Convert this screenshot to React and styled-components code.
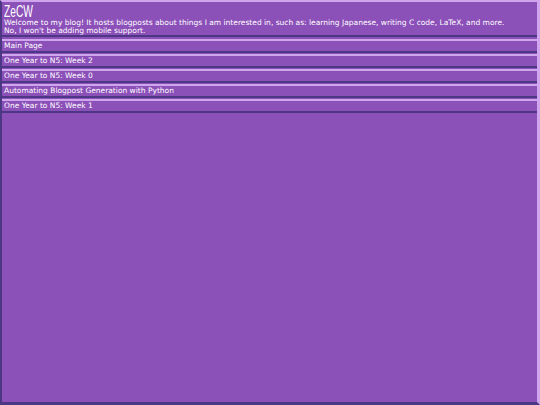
import React from 'react';
import styled, { createGlobalStyle } from 'styled-components';

const posts = [
  'Main Page',
  'One Year to N5: Week 2',
  'One Year to N5: Week 0',
  'Automating Blogpost Generation with Python',
  'One Year to N5: Week 1'
];

const GlobalStyle = createGlobalStyle`
  html, body {
    margin: 0;
    padding: 0;
    background: #8c50b9;
  }
  * {
    box-sizing: border-box;
  }
`;

const Page = styled.div`
  width: 540px;
  height: 405px;
  background: #8c50b9;
  border-top: 2px solid #cfa6ee;
  border-right: 3px solid #cfa6ee;
  border-left: 2px solid #4b3783;
  border-bottom: 3px solid #4b3783;
  display: flex;
  flex-direction: column;
  gap: 2px;
  font-family: "DejaVu Sans", "Liberation Sans", sans-serif;
  color: #ffffff;
`;

const Header = styled.header`
  display: flex;
  flex-direction: column;
  padding: 2px 2px 0;
  border-bottom: 2px solid #4b3783;
`;

const Title = styled.h1`
  margin: 0;
  height: 15px;
  font-family: "Liberation Sans", sans-serif;
  font-size: 17px;
  line-height: 15px;
  font-weight: normal;
  transform: scaleX(0.6);
  transform-origin: left center;
`;

const Intro = styled.p`
  margin: 0;
  font-size: 7.5px;
  line-height: 8px;
  white-space: nowrap;
`;

const PostList = styled.nav`
  display: flex;
  flex-direction: column;
  gap: 1px;
`;

const PostLink = styled.a`
  display: block;
  height: 14px;
  padding: 0 2px;
  border-top: 2px solid #cfa6ee;
  border-bottom: 2px solid #4b3783;
  font-size: 7.5px;
  line-height: 10px;
  color: #ffffff;
  text-decoration: none;
  white-space: nowrap;
`;

export default function App() {
  return (
    <>
      <GlobalStyle />
      <Page>
        <Header>
          <Title>ZeCW</Title>
          <Intro>
            Welcome to my blog! It hosts blogposts about things I am interested in, such as: learning Japanese, writing C code, LaTeX, and more.
          </Intro>
          <Intro>No, I won't be adding mobile support.</Intro>
        </Header>
        <PostList>
          {posts.map((title) => (
            <PostLink key={title} href="#">
              {title}
            </PostLink>
          ))}
        </PostList>
      </Page>
    </>
  );
}
